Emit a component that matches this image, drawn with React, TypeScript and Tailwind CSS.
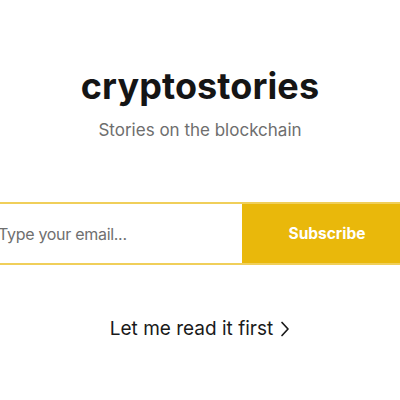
import React from "react";

export default function App() {
  return (
    <div className="w-[400px] h-[400px] overflow-hidden bg-white flex flex-col items-center font-['Inter',sans-serif]">
      <h1 className="mt-[63px] text-[36px] leading-[46px] font-bold tracking-[0.1px] text-[#151515]">
        cryptostories
      </h1>
      <p className="mt-[9px] text-[17px] leading-[24px] text-[#6e6e6e]">
        Stories on the blockchain
      </p>

      <form className="mt-[60px] w-[428px] shrink-0 h-[63px] flex border-2 border-[#f0cf5a]">
        <input
          type="email"
          placeholder="Type your email..."
          className="w-[254px] h-full pl-[10px] text-[16px] tracking-[-0.3px] text-[#222] placeholder:text-[#6f6f6f] outline-none bg-white"
        />
        <button
          type="button"
          className="flex-1 h-full bg-[#e9b80b] text-white text-[15.5px] font-bold"
        >
          Subscribe
        </button>
      </form>

      <a
        href="#"
        className="mt-[51px] flex items-center gap-[7px] text-[19px] leading-[26px] text-[#1a1a1a]"
      >
        Let me read it first
        <svg width="10" height="18" viewBox="0 0 10 18" fill="none">
          <path d="M2 2.5l6 6.5-6 6.5" stroke="#1a1a1a" strokeWidth="1.7" strokeLinecap="round" strokeLinejoin="round" />
        </svg>
      </a>
    </div>
  );
}
